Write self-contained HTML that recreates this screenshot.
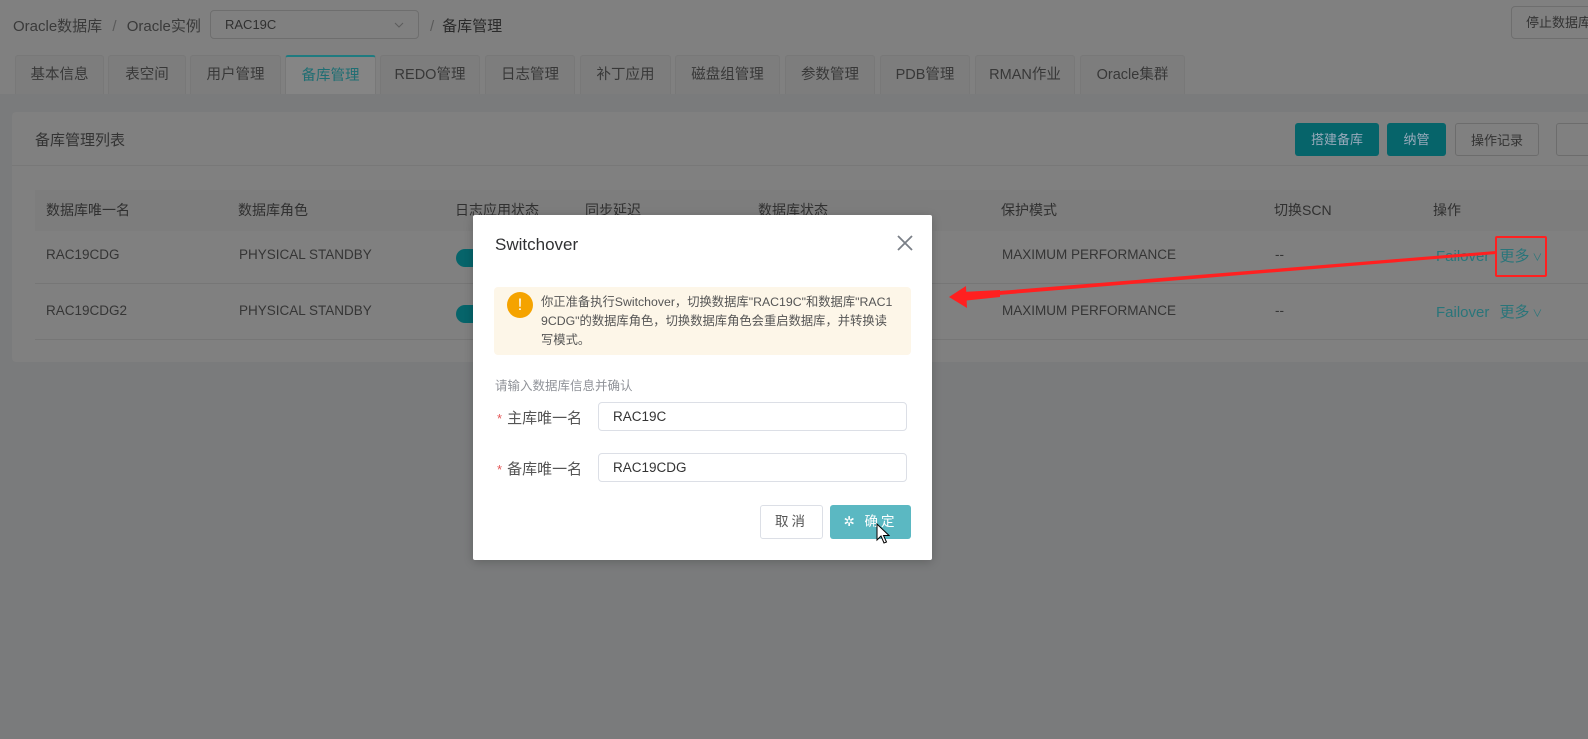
<!DOCTYPE html>
<html><head><meta charset="utf-8">
<style>
*{margin:0;padding:0;box-sizing:border-box}
body{width:1588px;height:739px;overflow:hidden;background:#7a7b7c;font-family:"Liberation Sans","Noto Sans CJK SC",sans-serif;position:relative;color:#333}
.a{position:absolute;white-space:nowrap}
.top{position:absolute;left:0;top:0;width:1588px;height:94px;background:#808080}
.tab{position:absolute;top:55px;height:39px;border:1px solid #787878;border-bottom:none;background:#7d7d7d;font-size:14.5px;color:#383838;text-align:center;line-height:38px;border-radius:3px 3px 0 0}
.tab.on{background:#858585;color:#1f6e73;border-top:2px solid #1f7b80}
.btn{position:absolute;top:123px;height:33px;border-radius:3px;font-size:13px;line-height:33px;text-align:center}
.th{font-size:14px;color:#303030;top:200px}
.td{font-size:13.5px;color:#353535}
.lnk{color:#29757a;font-size:15px}
.modal{position:absolute;left:473px;top:215px;width:459px;height:345px;background:#fff;border-radius:2px;box-shadow:0 2px 10px rgba(0,0,0,.2)}
.inp{position:absolute;left:125px;width:309px;height:29px;border:1px solid #dcdfe6;border-radius:4px;font-size:13.5px;color:#333;padding-left:14px;line-height:27px}
.lab{position:absolute;left:24px;font-size:15px;color:#555}
.lab b{color:#e45656;font-weight:normal;font-size:13px;margin-right:5px}
</style></head><body>
<div class="top"></div>
<div class="a" style="left:13px;top:15px;font-size:15px;color:#3a3a3a">Oracle数据库 <span style="color:#5a5a5a;margin:0 6px">/</span> Oracle实例</div>
<div class="a" style="left:210px;top:10px;width:209px;height:29px;border:1px solid #6e6e6e;border-radius:4px;background:#808080;font-size:13px;color:#303030;padding-left:14px;line-height:27px">RAC19C<svg style="position:absolute;right:14px;top:11px" width="10" height="6" viewBox="0 0 10 6"><path d="M1 1L5 5L9 1" stroke="#5c5c5c" fill="none"/></svg></div>
<div class="a" style="left:430px;top:15px;font-size:15px;color:#2a2a2a"><span style="color:#5a5a5a;margin-right:8px">/</span>备库管理</div>
<div class="a" style="left:1511px;top:6px;width:90px;height:33px;border:1px solid #6e6e6e;border-radius:4px;background:#808080;font-size:13px;color:#333;line-height:31px;padding-left:14px">停止数据库</div>
<div class="tab" style="left:15px;width:89px">基本信息</div>
<div class="tab" style="left:108px;width:78px">表空间</div>
<div class="tab" style="left:190px;width:91px">用户管理</div>
<div class="tab on" style="left:285px;width:91px">备库管理</div>
<div class="tab" style="left:380px;width:100px">REDO管理</div>
<div class="tab" style="left:485px;width:90px">日志管理</div>
<div class="tab" style="left:580px;width:91px">补丁应用</div>
<div class="tab" style="left:675px;width:105px">磁盘组管理</div>
<div class="tab" style="left:785px;width:90px">参数管理</div>
<div class="tab" style="left:880px;width:90px">PDB管理</div>
<div class="tab" style="left:975px;width:100px">RMAN作业</div>
<div class="tab" style="left:1080px;width:105px">Oracle集群</div>

<div class="a" style="left:12px;top:112px;width:1590px;height:250px;background:#808080;border-radius:4px"></div>
<div class="a" style="left:35px;top:129px;font-size:15px;color:#333">备库管理列表</div>
<div class="a" style="left:12px;top:165px;width:1576px;height:1px;background:#787878"></div>
<div class="btn" style="left:1295px;width:84px;background:#06646a;color:#9ab">搭建备库</div>
<div class="btn" style="left:1387px;width:59px;background:#06646a;color:#9ab">纳管</div>
<div class="btn" style="left:1455px;width:84px;border:1px solid #6c6c6c;color:#333">操作记录</div>
<div class="btn" style="left:1556px;width:40px;border:1px solid #6c6c6c"></div>

<div class="a" style="left:35px;top:190px;width:1553px;height:41px;background:#7d7d7d"></div>
<div class="a th" style="left:46px">数据库唯一名</div>
<div class="a th" style="left:238px">数据库角色</div>
<div class="a th" style="left:455px">日志应用状态</div>
<div class="a th" style="left:585px">同步延迟</div>
<div class="a th" style="left:758px">数据库状态</div>
<div class="a th" style="left:1001px">保护模式</div>
<div class="a th" style="left:1274px">切换SCN</div>
<div class="a th" style="left:1433px">操作</div>
<div class="a" style="left:35px;top:283px;width:1553px;height:1px;background:#767676"></div>
<div class="a" style="left:35px;top:339px;width:1553px;height:1px;background:#767676"></div>
<div class="a td" style="left:46px;top:247px">RAC19CDG</div>
<div class="a td" style="left:239px;top:247px">PHYSICAL STANDBY</div>
<div class="a" style="left:456px;top:249px;width:40px;height:18px;border-radius:9px;background:#06646a"></div>
<div class="a td" style="left:1002px;top:247px">MAXIMUM PERFORMANCE</div>
<div class="a td" style="left:1275px;top:247px">--</div>
<div class="a lnk" style="left:1436px;top:245px">Failover <span style="margin-left:6px">更多</span><span style="font-size:10px"> ∨</span></div>
<div class="a td" style="left:46px;top:303px">RAC19CDG2</div>
<div class="a td" style="left:239px;top:303px">PHYSICAL STANDBY</div>
<div class="a" style="left:456px;top:305px;width:40px;height:18px;border-radius:9px;background:#06646a"></div>
<div class="a td" style="left:1002px;top:303px">MAXIMUM PERFORMANCE</div>
<div class="a td" style="left:1275px;top:303px">--</div>
<div class="a lnk" style="left:1436px;top:301px">Failover <span style="margin-left:6px">更多</span><span style="font-size:10px"> ∨</span></div>

<div class="modal">
  <div class="a" style="left:22px;top:20px;font-size:17px;color:#303133">Switchover</div>
  <svg class="a" style="left:424px;top:20px" width="16" height="16" viewBox="0 0 16 16"><path d="M1 1L15 15M15 1L1 15" stroke="#7a7f87" stroke-width="1.8"/></svg>
  <div class="a" style="left:21px;top:72px;width:417px;height:68px;background:#fdf6e8;border-radius:4px"></div>
  <div class="a" style="left:34px;top:77px;width:26px;height:26px;border-radius:13px;background:#f5a300;color:#fff;font-size:17px;text-align:center;line-height:26px">!</div>
  <div class="a" style="left:68px;top:78px;width:358px;font-size:12.3px;color:#555;line-height:19px;white-space:normal;word-break:break-all">你正准备执行Switchover，切换数据库"RAC19C"和数据库"RAC19CDG"的数据库角色，切换数据库角色会重启数据库，并转换读写模式。</div>
  <div class="a" style="left:22px;top:160px;font-size:12.5px;color:#909399">请输入数据库信息并确认</div>
  <div class="lab" style="top:192px"><b>*</b>主库唯一名</div>
  <div class="inp" style="top:187px">RAC19C</div>
  <div class="lab" style="top:243px"><b>*</b>备库唯一名</div>
  <div class="inp" style="top:238px">RAC19CDG</div>
  <div class="a" style="left:287px;top:290px;width:63px;height:34px;border:1px solid #dcdfe6;border-radius:3px;font-size:13.5px;color:#555;text-align:center;line-height:32px;letter-spacing:3px">取消</div>
  <div class="a" style="left:357px;top:290px;width:81px;height:34px;background:#5bb8c2;border-radius:3px;font-size:13.5px;color:#fff;text-align:center;line-height:34px;letter-spacing:3px">✲ 确定</div>
  <svg class="a" style="left:403px;top:308px" width="14" height="22" viewBox="0 0 14 22"><path d="M1 1L1 17L5 13L8 20L10.5 19L7.5 12.5L13 12.5Z" fill="#fff" stroke="#000" stroke-width="1"/></svg>
</div>

<div class="a" style="left:1495px;top:236px;width:52px;height:41px;border:2px solid #ff2020;border-radius:2px"></div>
<svg class="a" style="left:0;top:0" width="1588" height="739"><polygon points="1496,251 1496,254 962,298 962,294" fill="#ff2020"/><polygon points="949,297 966,286 967,308" fill="#ff2020"/><polygon points="962,292 962,301 1000,297 1000,290" fill="#ff2020"/></svg>
</body></html>
